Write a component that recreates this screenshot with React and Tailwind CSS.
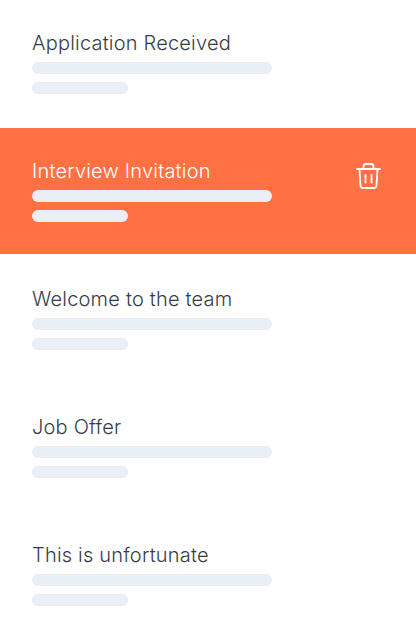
import React from 'react';

const items = [
  { title: 'Application Received' },
  { title: 'Interview Invitation', active: true },
  { title: 'Welcome to the team' },
  { title: 'Job Offer' },
  { title: 'This is unfortunate' },
];

const TrashIcon = () => (
  <svg width="26" height="28" viewBox="0 0 26 28" fill="none" stroke="#fff" strokeWidth="1.8" strokeLinecap="round" strokeLinejoin="round" className="mt-[6px] mr-[3px]">
    <path d="M2 7h23" />
    <path d="M4.5 7l1 16.5a2.5 2.5 0 0 0 2.5 2.5h11a2.5 2.5 0 0 0 2.5-2.5l1-16.5" />
    <path d="M8.5 7V4.5A2.5 2.5 0 0 1 11 2h5a2.5 2.5 0 0 1 2.5 2.5V7" />
    <path d="M10.5 13v7.5" />
    <path d="M16.5 13v7.5" />
  </svg>
);

const Row = ({ title, active }) => (
  <div className={`flex items-start justify-between px-8 pt-[28px] ${active ? 'bg-[#ff7043] h-[126px] mb-[2px]' : 'h-[128px]'}`}>
    <div>
      <p className={`text-[20px] leading-[30px] font-[350] tracking-[0.2px] ${active ? 'text-white' : 'text-[#373d47]'}`}>{title}</p>
      <div className="mt-[4px] w-[240px] h-3 rounded-full bg-[#e9eff5]" />
      <div className="mt-2 w-[96px] h-3 rounded-full bg-[#e9eff5]" />
    </div>
    {active && <TrashIcon />}
  </div>
);

export default function App() {
  return (
    <div className="w-[416px] h-[638px] overflow-hidden bg-white font-['Inter',sans-serif]">
      {items.map(item => (
        <Row key={item.title} title={item.title} active={item.active} />
      ))}
    </div>
  );
}
